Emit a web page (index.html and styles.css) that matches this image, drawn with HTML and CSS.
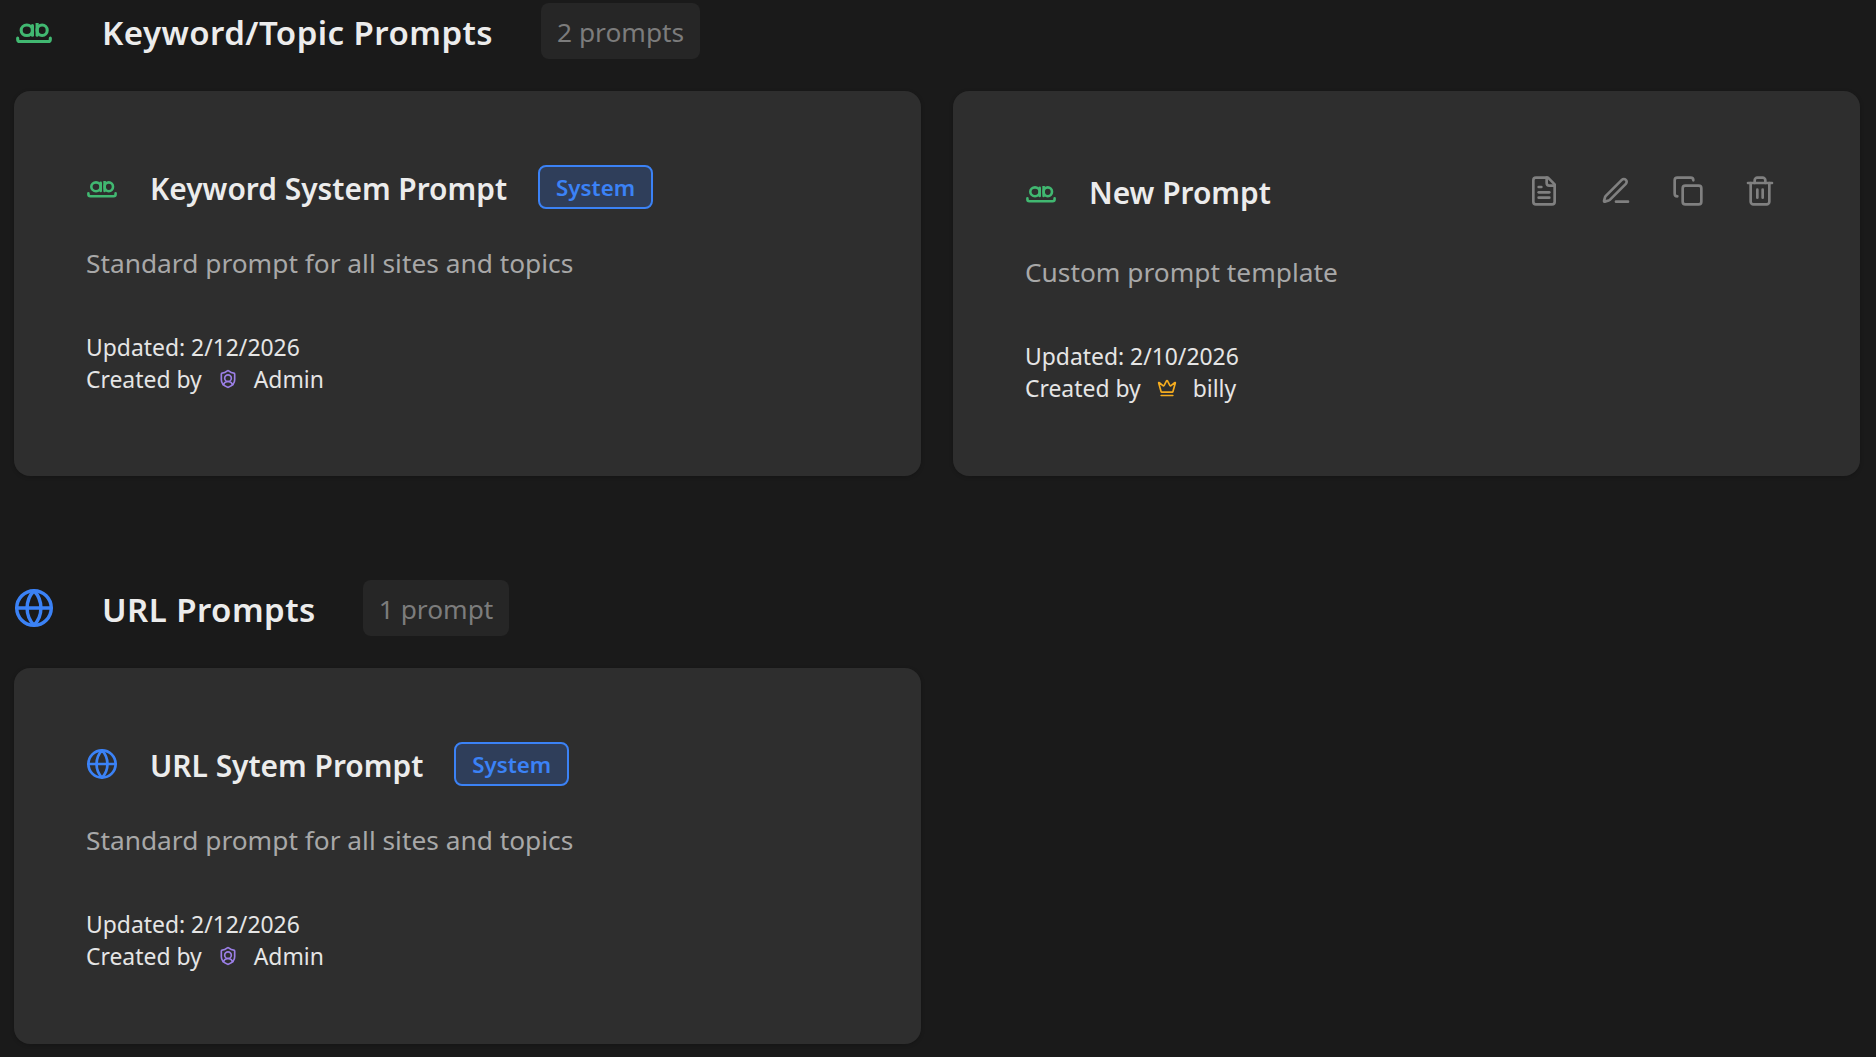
FILE: index.html
```html
<!DOCTYPE html>
<html lang="en">
<head>
<meta charset="utf-8">
<title>Prompts</title>
<link rel="stylesheet" href="styles.css">
</head>
<body>
<svg class="defs" aria-hidden="true">
  <symbol id="ab" viewBox="0 0 30 17"><g fill="none" stroke="currentColor" stroke-width="2.6" stroke-linecap="round" stroke-linejoin="round"><ellipse cx="9" cy="5.8" rx="4.7" ry="4.4"/><path d="M13.7 1.8V10"/><ellipse cx="21.8" cy="5.8" rx="4.2" ry="4.4"/><path d="M17.6 -.2V10"/><path d="M1.4 12.4v.8a2 2 0 0 0 2 2h23.2a2 2 0 0 0 2-2v-.8"/></g></symbol>
  <symbol id="globe" viewBox="1 1 22 22"><g fill="none" stroke="currentColor" stroke-width="2" stroke-linecap="round" stroke-linejoin="round"><circle cx="12" cy="12" r="10"/><path d="M12 2a14.5 14.5 0 0 0 0 20 14.5 14.5 0 0 0 0-20"/><path d="M2 12h20"/></g></symbol>
  <symbol id="shield" viewBox="0 0 24 24"><g fill="none" stroke="currentColor" stroke-width="2" stroke-linecap="round" stroke-linejoin="round"><path d="M20 13c0 5-3.5 7.5-7.66 8.95a1 1 0 0 1-.67-.01C7.5 20.5 4 18 4 13V6a1 1 0 0 1 1-1c2 0 4.5-1.2 6.24-2.72a1.17 1.17 0 0 1 1.52 0C14.51 3.81 17 5 19 5a1 1 0 0 1 1 1z"/><path d="M6.376 18.91a6 6 0 0 1 11.249.003"/><circle cx="12" cy="11" r="4"/></g></symbol>
  <symbol id="crown" viewBox="0 0 24 24"><g fill="none" stroke="currentColor" stroke-width="2" stroke-linecap="round" stroke-linejoin="round"><path d="M11.562 3.266a.5.5 0 0 1 .876 0L15.39 8.87a1 1 0 0 0 1.516.294L21.183 5.5a.5.5 0 0 1 .798.519l-2.834 10.246a1 1 0 0 1-.956.734H5.81a1 1 0 0 1-.957-.734L2.02 6.02a.5.5 0 0 1 .798-.519l4.276 3.664a1 1 0 0 0 1.516-.294z"/><path d="M5 21h14"/></g></symbol>
</svg>
<main class="page">
  <section class="section">
    <header class="section-head">
      <svg class="section-icon green ab-lg"><use href="#ab"/></svg>
      <h2 class="section-title">Keyword/Topic Prompts</h2>
      <span class="count">2 prompts</span>
    </header>
    <div class="grid">
      <article class="card">
        <div class="card-head">
          <svg class="card-icon green ab-sm"><use href="#ab"/></svg>
          <h3 class="card-title">Keyword System Prompt</h3>
          <span class="tag">System</span>
        </div>
        <p class="desc">Standard prompt for all sites and topics</p>
        <div class="meta">
          <div>Updated: 2/12/2026</div>
          <div class="by">Created by <svg class="role purple"><use href="#shield"/></svg> Admin</div>
        </div>
      </article>
      <article class="card">
        <div class="card-head tall">
          <svg class="card-icon green ab-sm"><use href="#ab"/></svg>
          <h3 class="card-title">New Prompt</h3>
          <div class="actions">
            <button class="action" aria-label="View"><svg viewBox="0 0 24 24"><path d="M15 2H6a2 2 0 0 0-2 2v16a2 2 0 0 0 2 2h12a2 2 0 0 0 2-2V7Z"/><path d="M14 2v4a2 2 0 0 0 2 2h4"/><path d="M10 9H8"/><path d="M16 13H8"/><path d="M16 17H8"/></svg></button>
            <button class="action" aria-label="Edit"><svg viewBox="0 0 24 24"><path d="M12 20h9"/><path d="M16.376 3.622a1 1 0 0 1 3.002 3.002L7.368 18.635a2 2 0 0 1-.855.506l-2.872.838a.5.5 0 0 1-.62-.62l.838-2.872a2 2 0 0 1 .506-.854z"/></svg></button>
            <button class="action" aria-label="Copy"><svg viewBox="0 0 24 24"><rect x="8" y="8" width="14" height="14" rx="2"/><path d="M4 16c-1.1 0-2-.9-2-2V4c0-1.1.9-2 2-2h10c1.1 0 2 .9 2 2"/></svg></button>
            <button class="action" aria-label="Delete"><svg viewBox="0 0 24 24"><path d="M3 6h18"/><path d="M19 6v14c0 1-1 2-2 2H7c-1 0-2-1-2-2V6"/><path d="M8 6V4c0-1 1-2 2-2h4c1 0 2 1 2 2v2"/><path d="M10 11v6"/><path d="M14 11v6"/></svg></button>
          </div>
        </div>
        <p class="desc">Custom prompt template</p>
        <div class="meta">
          <div>Updated: 2/10/2026</div>
          <div class="by">Created by <svg class="role yellow"><use href="#crown"/></svg> billy</div>
        </div>
      </article>
    </div>
  </section>
  <section class="section">
    <header class="section-head">
      <svg class="section-icon blue globe-lg"><use href="#globe"/></svg>
      <h2 class="section-title tight">URL Prompts</h2>
      <span class="count">1 prompt</span>
    </header>
    <div class="grid">
      <article class="card">
        <div class="card-head">
          <svg class="card-icon blue globe-sm"><use href="#globe"/></svg>
          <h3 class="card-title">URL Sytem Prompt</h3>
          <span class="tag">System</span>
        </div>
        <p class="desc">Standard prompt for all sites and topics</p>
        <div class="meta">
          <div>Updated: 2/12/2026</div>
          <div class="by">Created by <svg class="role purple"><use href="#shield"/></svg> Admin</div>
        </div>
      </article>
    </div>
  </section>
</main>
</body>
</html>
```
FILE: styles.css
```css
* { box-sizing: border-box; }
html, body { margin: 0; height: 100%; overflow: hidden; }
body {
  background: #1a1a1a;
  color: #e5e5e5;
  font-family: "Noto Sans", "Open Sans", sans-serif;
}
.defs { display: none; }
.page { padding: 3px 16px 0 14px; }
.section + .section { margin-top: 104px; }
.section-head { display: flex; align-items: center; height: 56px; margin-bottom: 32px; }
.section-icon { flex: none; margin-left: 2px; }
.ab-lg { width: 36px; height: 21px; margin-top: 5px; overflow: visible; }
.globe-lg { width: 38px; height: 38px; margin-left: 1px; }
.section-title { margin: 4px 48px 0 50px; font-size: 33px; font-weight: 600; letter-spacing: .45px; line-height: 50px; color: #ececec; }
.section-title.tight { margin-left: 49px; margin-right: 47px; }
.count { height: 56px; padding: 0 16px; line-height: 58px; font-size: 26.3px; color: #7c7c7c; background: #262626; border-radius: 8px; }
.green { color: #41b871; }
.blue { color: #3b82f6; }
.purple { color: #9b7fe6; }
.yellow { color: #f5ac1f; }
.grid { display: grid; grid-template-columns: 1fr 1fr; gap: 32px; }
.card { padding: 72px 72px 71px; background: #2e2e2e; border-radius: 16px; box-shadow: 0 1px 4px rgba(0,0,0,.2); }
.card-head { display: flex; align-items: center; min-height: 47px; }
.card-head.tall { min-height: 55px; }
.card-icon { flex: none; margin-left: 1px; }
.ab-sm { width: 30px; height: 17px; margin-top: 6px; overflow: visible; }
.globe-sm { width: 30px; height: 30px; }
.card-title { margin: 4px 31px 0 33px; font-size: 29.9px; font-weight: 600; line-height: 42px; color: #ececec; }
.tag { height: 44px; padding: 0 16px; line-height: 41px; font-size: 22.3px; font-weight: 600; color: #3b82f6; background: #2f3e5a; border: 2px solid #3b82f6; border-radius: 8px; }
.actions { display: flex; gap: 16px; margin-left: auto; }
.action { display: flex; padding: 12px; background: none; border: 0; }
.action svg { width: 32px; height: 32px; fill: none; stroke: #808080; stroke-width: 2; stroke-linecap: round; stroke-linejoin: round; }
.desc { margin: 35px 0 51px; font-size: 26.3px; line-height: 36px; color: #a8a8a8; }
.meta { font-size: 22.9px; line-height: 32px; color: #e5e5e5; }
.by { display: flex; align-items: center; gap: 16px; }
.role { flex: none; width: 20px; height: 20px; margin-top: -2px; }
```
